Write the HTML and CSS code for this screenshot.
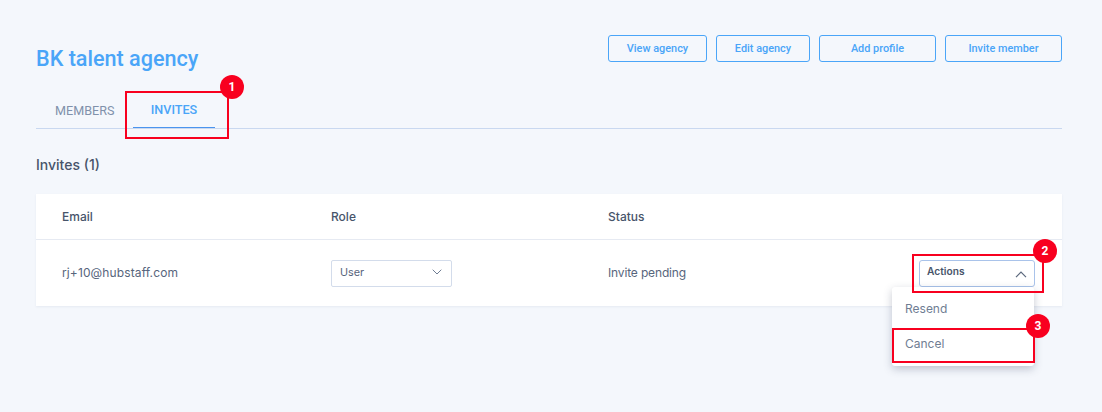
FILE: index.html
```html
<!DOCTYPE html>
<html lang="en">
<head>
<meta charset="utf-8">
<title>BK talent agency</title>
<link rel="stylesheet" href="styles.css">
</head>
<body>
<main class="page">
  <header class="top">
    <h1 class="title">BK talent agency</h1>
    <div class="buttons">
      <a class="btn btn-view">View agency</a>
      <a class="btn btn-edit">Edit agency</a>
      <a class="btn btn-add">Add profile</a>
      <a class="btn btn-invite">Invite member</a>
    </div>
  </header>
  <nav class="tabs">
    <a class="tab tab-members">MEMBERS</a>
    <a class="tab tab-invites">INVITES</a>
  </nav>
  <h2 class="section">Invites (1)</h2>
  <section class="card">
    <div class="row head">
      <div class="col-email">Email</div>
      <div class="col-role">Role</div>
      <div class="col-status">Status</div>
    </div>
    <div class="row body">
      <div class="col-email cell-email">rj+10@hubstaff.com</div>
      <div class="col-role">
        <div class="select"><span>User</span>
          <svg class="chev-down" width="10" height="6" viewBox="0 0 10 6"><path d="M.7.7 5 5 9.3.7" fill="none" stroke="#6f7d93" stroke-width="1"/></svg>
        </div>
      </div>
      <div class="col-status cell-status">Invite pending</div>
      <div class="col-actions">
        <div class="actions"><span>Actions</span>
          <svg width="12" height="7" viewBox="0 0 12 7"><path d="M1 6.2 6 1.2l5 5" fill="none" stroke="#5b687d" stroke-width="1.2"/></svg>
        </div>
      </div>
    </div>
  </section>
  <div class="menu">
    <div class="menu-item">Resend</div>
    <div class="menu-item">Cancel</div>
  </div>
  <div class="mark mark-1"></div>
  <div class="mark mark-2"></div>
  <div class="mark mark-3"></div>
  <div class="badge badge-1">1</div>
  <div class="badge badge-2">2</div>
  <div class="badge badge-3">3</div>
</main>
</body>
</html>
```
FILE: styles.css
```css
* { box-sizing: border-box; }
html, body { margin: 0; height: 100%; }
body { background: #f4f7fc; overflow: hidden; }
.page { position: relative; width: 1102px; height: 412px; padding: 35px 40px 0 36px; font-family: Inter, sans-serif; }
.top { display: flex; justify-content: space-between; align-items: flex-start; height: 56px; }
.title { margin: 11px 0 0; font: 500 21.6px/26px Roboto, sans-serif; color: #4aa5f8; }
.buttons { display: flex; gap: 9px; }
.btn { display: flex; align-items: center; justify-content: center; height: 27px; padding-top: 1px; border: 1px solid #4aa5f8; border-radius: 3px; font: 500 10.9px/1 Roboto, sans-serif; color: #4aa5f8; }
.btn-view { width: 99px; }
.btn-edit { width: 94px; }
.btn-add { width: 117px; }
.btn-invite { width: 117px; }
.tabs { display: flex; height: 38px; border-bottom: 1px solid #c9d8f0; padding-left: 19px; }
.tab { font: 400 12.6px/1 Roboto, sans-serif; }
.tab-members { width: 78px; padding-top: 14px; color: #8091ab; }
.tab-invites { width: 82px; height: 37px; padding-top: 13px; text-align: center; color: #4aa5f8; font-weight: 500; border-bottom: 1px solid #4a94ee; }
.section { margin: 0; padding-top: 28px; height: 65px; font: 500 14px/16px Inter, sans-serif; color: #47546a; }
.card { background: #fff; box-shadow: 0 1px 2px rgba(70, 90, 130, .08); height: 112px; }
.row { display: flex; align-items: center; padding-left: 26px; position: relative; }
.head { height: 46px; border-bottom: 1px solid #e6eaf2; font: 500 12px/1 Inter, sans-serif; color: #47546a; }
.body { height: 66px; font: 400 12px/1 Inter, sans-serif; color: #57657c; }
.col-email { width: 269px; }
.col-role { width: 277px; }
.col-status { width: 311px; }
.cell-email { letter-spacing: .12px; }
.cell-status { letter-spacing: -.15px; }
.select { display: flex; align-items: center; justify-content: space-between; width: 121px; height: 27px; padding: 0 9px 0 8px; border: 1px solid #d3dceb; border-radius: 2px; font-size: 10.8px; }
.chev-down { display: block; margin-bottom: 2px; }
.actions { display: flex; align-items: center; justify-content: space-between; width: 116px; height: 27px; padding: 0 7px 0 7px; border: 1px solid #a9c3ea; border-radius: 3px; font: 600 10.2px/1 Inter, sans-serif; color: #47546a; }
.actions svg { display: block; margin-top: 3px; }
.actions span { margin-bottom: 3px; }
.menu { position: absolute; left: 892px; top: 287px; width: 142px; height: 79px; padding-top: 4px; background: #fff; border-radius: 3px; box-shadow: 0 3px 9px rgba(50, 60, 90, .28); }
.menu-item { height: 35px; padding-left: 13px; font: 400 12px/35px Inter, sans-serif; color: #6f7d93; }
.mark { position: absolute; border: 2px solid #f8001f; }
.mark-1 { left: 125px; top: 91px; width: 104px; height: 48px; }
.mark-2 { left: 912px; top: 254px; width: 132px; height: 39px; }
.mark-3 { left: 892px; top: 328px; width: 143px; height: 35px; }
.badge { position: absolute; width: 24px; height: 24px; border-radius: 50%; background: #f8001f; color: #fff; font: 700 12px/24px Roboto, sans-serif; text-align: center; }
.badge-1 { left: 220px; top: 75px; }
.badge-2 { left: 1033px; top: 239px; }
.badge-3 { left: 1026px; top: 314px; }
```
